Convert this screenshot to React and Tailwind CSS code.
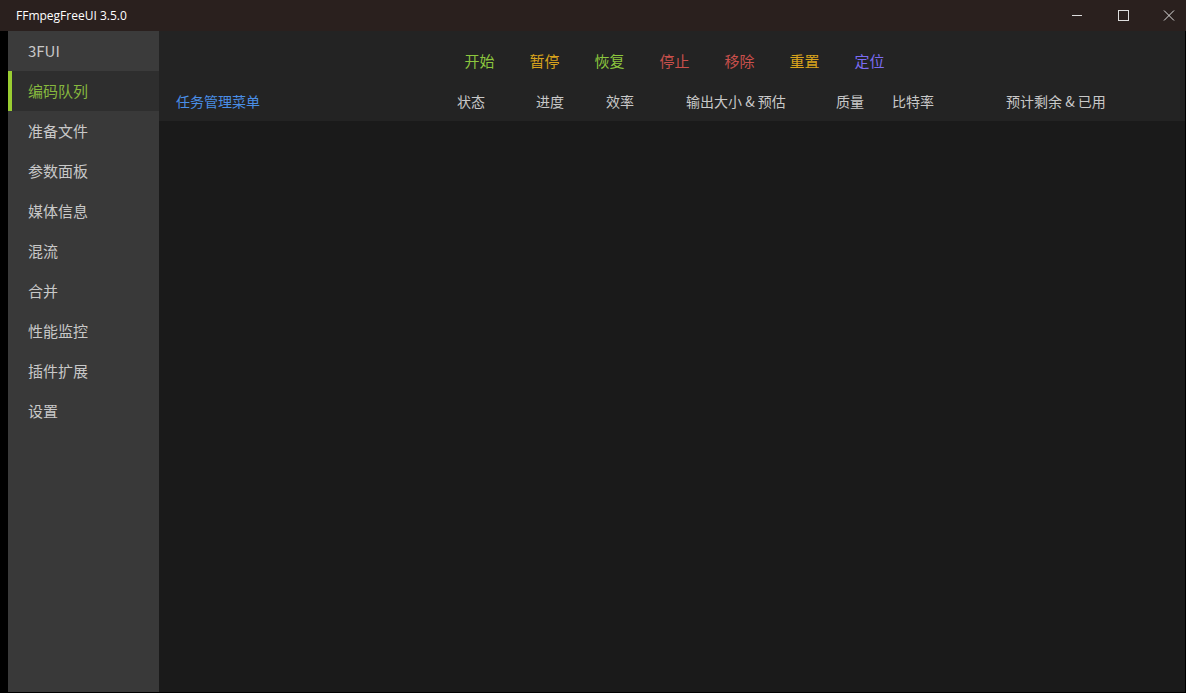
const navItems = ["3FUI", "编码队列", "准备文件", "参数面板", "媒体信息", "混流", "合并", "性能监控", "插件扩展", "设置"];

const actions = [
  { label: "开始", color: "text-[#8cc63e]" },
  { label: "暂停", color: "text-[#d9a41c]" },
  { label: "恢复", color: "text-[#8cc63e]" },
  { label: "停止", color: "text-[#c9504c]" },
  { label: "移除", color: "text-[#c9504c]" },
  { label: "重置", color: "text-[#d9a41c]" },
  { label: "定位", color: "text-[#7b6cf2]" },
];

const columns = [
  { label: "状态", w: "w-[79px]" },
  { label: "进度", w: "w-[70px]" },
  { label: "效率", w: "w-[80px]" },
  { label: "输出大小 & 预估", w: "w-[150px]" },
  { label: "质量", w: "w-[56px]" },
  { label: "比特率", w: "w-[114px]" },
  { label: "预计剩余 & 已用", w: "w-[124px]" },
];

export default function App() {
  return (
    <div className="w-[1186px] h-[693px] flex flex-col bg-black overflow-hidden font-['Noto_Sans_CJK_SC','Noto_Sans',sans-serif]">
      {/* title bar */}
      <div className="h-[31px] flex items-center bg-[#2a201e] text-white shrink-0">
        <div className="pl-[16px] text-[12px] font-['Open_Sans','Noto_Sans',sans-serif] flex-1">FFmpegFreeUI 3.5.0</div>
        <div className="flex items-center gap-[34px] pr-[11px]">
          <svg width="12" height="11" viewBox="0 0 12 11"><path d="M1 5.5h10" stroke="#ddd" strokeWidth="1" /></svg>
          <svg width="12" height="11" viewBox="0 0 12 11"><rect x="1.5" y="0.5" width="10" height="10" fill="none" stroke="#ddd" strokeWidth="1" /></svg>
          <svg width="12" height="11" viewBox="0 0 12 11"><path d="M1 0.5l10 10M11 0.5l-10 10" stroke="#ddd" strokeWidth="1" /></svg>
        </div>
      </div>

      <div className="flex flex-1 min-h-0 pl-[8px] pb-[1px] pr-[1px]">
        {/* sidebar */}
        <div className="w-[151px] bg-[#393939] flex flex-col shrink-0">
          {navItems.map((item, i) => (
            <div
              key={item}
              className={
                "h-10 flex items-center pl-[20px] text-[15px] relative " +
                (i === 0 ? "bg-[#3b3b3b] text-[#c8c8c8]" : i === 1 ? "bg-[#2e2e2e] text-[#86b83e]" : "text-[#c8c8c8]")
              }
            >
              {i === 1 && <div className="absolute left-0 top-0 h-full w-[4px] bg-[#9acd32]" />}
              {item}
            </div>
          ))}
        </div>

        {/* main */}
        <div className="flex-1 flex flex-col bg-[#1a1a1a]">
          <div className="h-[90px] bg-[#232323] flex flex-col">
            <div className="h-[60px] flex items-center pl-[288px] text-[15px]">
              {actions.map((a) => (
                <div key={a.label} className={"w-[65px] text-center " + a.color}>{a.label}</div>
              ))}
            </div>
            <div className="h-[20px] flex items-center text-[14px] text-[#c8c8c8]">
              <div className="w-[281px] pl-[17px] text-[#4a8ee6]">任务管理菜单</div>
              <div className="w-[17px]" />
              {columns.map((c) => (
                <div key={c.label} className={c.w}>{c.label}</div>
              ))}
            </div>
          </div>
        </div>
      </div>
    </div>
  );
}
